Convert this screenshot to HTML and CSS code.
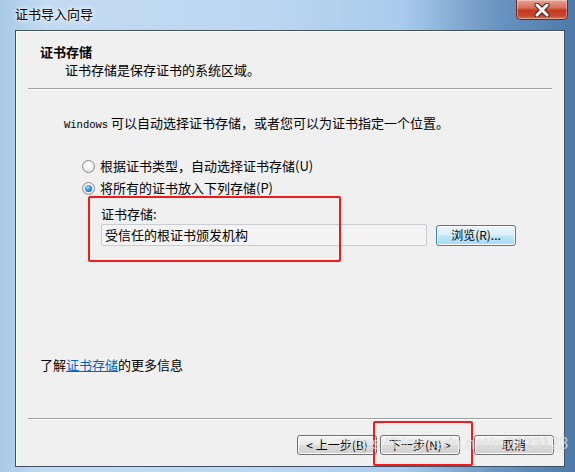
FILE: index.html
```html
<!DOCTYPE html>
<html lang="zh-CN">
<head>
    <meta charset="UTF-8"/>
    <title>证书导入向导</title>
    <link rel="stylesheet" href="styles.css">
</head>
<body>
<div class="window">
    <div class="titlebar">
        <span class="title">证书导入向导</span>
        <span class="close">
            <svg width="18" height="14" viewBox="0 0 18 14">
                <path d="M4 2 L14 12 M14 2 L4 12" stroke="#4a2020" stroke-width="5" stroke-linecap="round"/>
                <path d="M4 2 L14 12 M14 2 L4 12" stroke="#fff" stroke-width="3" stroke-linecap="round"/>
            </svg>
        </span>
    </div>
    <div class="client">
        <div class="header">
            <div class="h-title">证书存储</div>
            <div class="h-desc">证书存储是保存证书的系统区域。</div>
        </div>
        <div class="etch"></div>
        <div class="content">
            <p class="intro"><span class="mono">Windows</span> 可以自动选择证书存储，或者您可以为证书指定一个位置。</p>
            <div class="radio"><span class="dot"></span>根据证书类型，自动选择证书存储(U)</div>
            <div class="radio checked"><span class="dot"></span>将所有的证书放入下列存储(P)</div>
            <div class="store">
                <div class="store-label">证书存储:</div>
                <div class="store-row">
                    <div class="field">受信任的根证书颁发机构</div>
                    <span class="btn browse">浏览(R)...</span>
                </div>
                <div class="mark mark-store"></div>
            </div>
            <p class="more">了解<a href="#">证书存储</a>的更多信息</p>
        </div>
        <div class="etch"></div>
        <div class="footer">
            <span class="btn">&lt; 上一步(B)</span>
            <span class="next-wrap">
                <span class="btn">下一步(N) &gt;</span>
                <span class="mark mark-next"></span>
            </span>
            <span class="btn cancel">取消</span>
        </div>
    </div>
    <div class="watermark">https://blog.csdn.net/m2123123</div>
</div>
</body>
</html>
```

FILE: styles.css
```css
body{margin:0;background:#fff;}
.window{position:relative;width:575px;height:472px;box-sizing:border-box;padding:0 10px 5px 15px;display:flex;flex-direction:column;
    background:linear-gradient(90deg,#a9c9e6 0%,#c3dbf1 8%,#bcd7f1 45%,#a9cbec 70%,#6b95c2 86%,#4d7aa9 100%);
    font:13px/18px "Noto Sans CJK SC",sans-serif;color:#000;}
.titlebar{height:30px;display:flex;justify-content:space-between;align-items:flex-start;}
.title{margin:5px 0 0 0;font-size:13px;line-height:18px;color:#000;text-shadow:0 0 6px #fff,0 0 3px #fff;}
.close{width:50px;height:19px;margin-right:-3px;border:1px solid #6d2a20;border-top:0;border-radius:0 0 5px 5px;display:flex;align-items:center;justify-content:center;
    background:linear-gradient(#e8a493 0%,#d8715c 40%,#c2391e 55%,#c84a2c 85%,#d9785e 100%);box-shadow:inset 0 0 0 1px rgba(255,255,255,.35);}
.client{flex:1;display:flex;flex-direction:column;background:#f0f0f0;border:1px solid #3f4f66;box-shadow:inset 1px 1px 0 #fff;}
.header{padding:12px 0 9px 24px;}
.h-title{font-weight:bold;}
.h-desc{padding-left:25px;}
.etch{margin:0 12px;border-top:1px solid #a0a0a0;border-bottom:1px solid #fff;}
.content{flex:1;}
.content p{margin:0;}
.intro{margin-top:24px!important;padding-left:48px;}
.mono{font:10.5px "Liberation Mono",monospace;}
.radio{display:flex;align-items:center;padding-left:66px;margin-top:4px;}
.intro + .radio{margin-top:25px;}
.dot{width:11px;height:11px;border:1px solid #8a8a8a;border-radius:50%;margin-right:5px;box-sizing:content-box;
    background:radial-gradient(circle at 50% 40%,#fff 0%,#f2f2f2 45%,#cfcfcf 100%);position:relative;}
.checked .dot::after{content:"";position:absolute;left:2px;top:2px;width:7px;height:7px;border-radius:50%;
    background:radial-gradient(circle at 40% 35%,#a8e4ff 0%,#2c8fd6 50%,#0b4f99 100%);}
.store{position:relative;padding-left:85px;margin-top:8px;}
.store-row{display:flex;align-items:center;margin-top:1px;}
.field{width:321px;height:20px;line-height:20px;padding-left:3px;border:1px solid #c9ccd1;border-radius:2px;background:#f4f4f4;}
.btn{display:inline-flex;align-items:center;justify-content:center;box-sizing:border-box;width:80px;height:21px;border:1px solid #707070;border-radius:3px;
    font-size:12px;line-height:16px;background:linear-gradient(#f2f2f2 0%,#ebebeb 48%,#dddddd 52%,#cfcfcf 100%);box-shadow:inset 0 0 0 1px #fcfcfc;}
.browse{margin-left:9px;border-color:#3c7fb1;background:linear-gradient(#eaf6fd 0%,#d9f0fc 48%,#bee6fd 52%,#a7d9f5 100%);}
.mark{position:absolute;border:2px solid #f21a1a;border-radius:2px;box-sizing:border-box;}
.mark-store{left:72px;top:-9px;width:253px;height:66px;}
.more{margin-top:110px!important;padding-left:24px;}
.more a{color:#0066cc;}
.footer{display:flex;justify-content:flex-end;align-items:center;padding:15px 10px 11px 0;}
.footer .btn{width:80px;height:20px;}
.next-wrap{position:relative;margin-left:3px;}
.mark-next{left:-7px;top:-14px;width:100px;height:45px;}
.cancel{margin-left:14px;}
.watermark{position:absolute;left:345px;top:434px;font:16px/20px "Liberation Sans",sans-serif;color:rgba(255,255,255,.55);
    text-shadow:0 0 1px rgba(150,150,150,.45);pointer-events:none;}
```
